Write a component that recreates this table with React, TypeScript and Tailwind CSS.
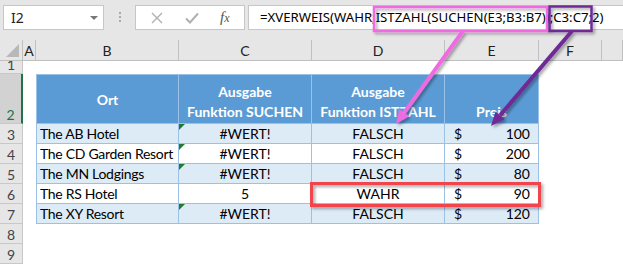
import { Fragment } from "react"

const COLS = ["A", "B", "C", "D", "E", "F", ""]

type Row = { ort: string; suchen: string; istzahl: string; preis: string; err: boolean }

const ROWS: Row[] = [
  { ort: "The AB Hotel", suchen: "#WERT!", istzahl: "FALSCH", preis: "100", err: true },
  { ort: "The CD Garden Resort", suchen: "#WERT!", istzahl: "FALSCH", preis: "200", err: true },
  { ort: "The MN Lodgings", suchen: "#WERT!", istzahl: "FALSCH", preis: "80", err: true },
  { ort: "The RS Hotel", suchen: "5", istzahl: "WAHR", preis: "90", err: false },
  { ort: "The XY Resort", suchen: "#WERT!", istzahl: "FALSCH", preis: "120", err: true }
]

const cellFont = { fontFamily: "Lato, 'Liberation Sans', sans-serif" }

// arrow head points for a line from (x1,y1) to tip (x2,y2)
function arrow(x1: number, y1: number, x2: number, y2: number, len = 14, half = 6) {
  const dx = x2 - x1
  const dy = y2 - y1
  const l = Math.hypot(dx, dy)
  const ux = dx / l
  const uy = dy / l
  const bx = x2 - ux * len
  const by = y2 - uy * len
  const nx = -uy
  const ny = ux
  return {
    line: { x1, y1, x2: bx, y2: by },
    head: `${x2},${y2} ${bx + nx * half},${by + ny * half} ${bx - nx * half},${by - ny * half}`
  }
}

function RowHead({ n, selected }: { n: number | string; selected?: boolean }) {
  return (
    <div
      className={`flex items-end justify-center border-b border-r border-[#c8c8c8] pb-[1px] text-[14px] leading-none ${
        selected ? "bg-[#d2d2d2] text-[#217346] border-r-2 border-r-[#217346]" : "bg-[#e6e6e6] text-[#444]"
      }`}
      style={cellFont}>
      {n}
    </div>
  )
}

function Toolbar() {
  return (
    <div className="flex h-[40px] items-start bg-[#e6e6e6] pt-[5px] text-[14px]" style={{ fontFamily: "'Noto Sans', 'Open Sans', sans-serif" }}>
      <div className="ml-[3px] flex h-[25px] w-[101px] items-center justify-between border border-[#c6c6c6] bg-white pl-[7px] pr-[5px] text-[#222]">
        <span>I2</span>
        <span className="h-0 w-0 border-l-[4px] border-r-[4px] border-t-[4px] border-l-transparent border-r-transparent border-t-[#777]" />
      </div>
      <div className="flex w-[31px] flex-col items-center gap-[2px] pt-[7px]">
        <span className="h-[2px] w-[2px] bg-[#aaa]" />
        <span className="h-[2px] w-[2px] bg-[#aaa]" />
        <span className="h-[2px] w-[2px] bg-[#aaa]" />
      </div>
      <div className="flex h-[25px] w-[110px] items-center border border-[#c6c6c6] bg-white pl-[14px]">
        <svg width="12" height="12" viewBox="0 0 12 12" className="ml-[1px]">
          <path d="M1 1 L11 11 M11 1 L1 11" stroke="#b0b0b0" strokeWidth="1.4" fill="none" />
        </svg>
        <svg width="14" height="12" viewBox="0 0 14 12" className="ml-[22px]">
          <path d="M1 6.5 L5 10.5 L13 1.5" stroke="#b0b0b0" strokeWidth="2" fill="none" />
        </svg>
        <span className="ml-[21px] text-[15px] italic text-[#555]" style={{ fontFamily: "'Liberation Serif', serif" }}>
          f<span className="text-[12px]">x</span>
        </span>
      </div>
      <div className="ml-[3px] flex h-[25px] flex-1 items-center whitespace-nowrap border border-r-0 border-[#c6c6c6] bg-white pl-[11px] text-[13.2px] text-black">
        =XVERWEIS(WAHR;ISTZAHL(SUCHEN(E3;B3:B7));C3:C7;2)
      </div>
    </div>
  )
}

export default function App() {
  const pink = arrow(463, 31, 396, 124)
  const purple = arrow(572, 31, 491, 126)

  return (
    <div className="relative h-[265px] w-[623px] overflow-hidden bg-white">
      <Toolbar />

      <div className="grid grid-cols-[23px_13px_143px_133px_133px_94px_63px_1fr] grid-rows-[21px_13px_50px_repeat(7,20px)]" style={cellFont}>
        {/* column headers */}
        <div className="relative border-b border-r border-[#c0c0c0] bg-[#e6e6e6]">
          <span className="absolute bottom-[3px] right-[3px] h-0 w-0 border-b-[13px] border-l-[13px] border-b-[#b8b8b8] border-l-transparent" />
        </div>
        {COLS.map((c, i) => (
          <div key={i} className="flex items-center justify-center border-b border-r border-[#c0c0c0] bg-[#e6e6e6] text-[14px] text-[#222]">
            {c}
          </div>
        ))}

        {/* row 1 */}
        <RowHead n={1} />
        <div className="col-span-7" />

        {/* row 2: table header */}
        <RowHead n={2} selected />
        <div />
        <div className="flex items-center justify-center border border-[#9bc2e6] bg-[#5b9bd5] text-[14px] font-bold text-white">Ort</div>
        <div className="flex flex-col items-center justify-end border-b border-r border-t border-[#9bc2e6] bg-[#5b9bd5] pb-[1px] text-[14px] font-bold leading-[20px] text-white">
          <span>Ausgabe</span>
          <span>Funktion SUCHEN</span>
        </div>
        <div className="flex flex-col items-center justify-end border-b border-r border-t border-[#9bc2e6] bg-[#5b9bd5] pb-[1px] text-[14px] font-bold leading-[20px] text-white">
          <span>Ausgabe</span>
          <span>Funktion ISTZAHL</span>
        </div>
        <div className="flex items-end justify-center border-b border-r border-t border-[#9bc2e6] bg-[#5b9bd5] pb-[1px] text-[14px] font-bold leading-[20px] text-white">
          Preis
        </div>
        <div />
        <div />

        {/* data rows */}
        {ROWS.map((r, i) => {
          const bg = i % 2 === 0 ? "bg-[#ddebf7]" : "bg-white"
          return (
            <Fragment key={r.ort}>
              <RowHead n={i + 3} />
              <div />
              <div className={`flex items-center whitespace-nowrap border-b border-l border-r border-[#9bc2e6] pl-[3px] text-[14px] tracking-[-0.3px] text-black ${bg}`}>
                {r.ort}
              </div>
              <div className={`relative flex items-center justify-center border-b border-r border-[#9bc2e6] text-[14px] text-black ${bg}`}>
                {r.err && (
                  <span className="absolute left-0 top-0 h-0 w-0 border-r-[6px] border-t-[6px] border-r-transparent border-t-[#1e7b34]" />
                )}
                {r.suchen}
              </div>
              <div className={`flex items-center justify-center border-b border-r border-[#9bc2e6] text-[14px] text-black ${bg}`}>{r.istzahl}</div>
              <div className={`flex items-center justify-between border-b border-r border-[#9bc2e6] pl-[9px] pr-[8px] text-[14px] text-black ${bg}`}>
                <span>$</span>
                <span>{r.preis}</span>
              </div>
              <div />
              <div />
            </Fragment>
          )
        })}

        {/* rows 8, 9 */}
        <RowHead n={8} />
        <div className="col-span-7" />
        <RowHead n={9} />
        <div className="col-span-7" />
      </div>

      {/* annotations */}
      <svg className="pointer-events-none absolute left-0 top-0" width="623" height="265" viewBox="0 0 623 265">
        <defs>
          <filter id="sh" x="-20%" y="-20%" width="140%" height="140%">
            <feDropShadow dx="2" dy="2" stdDeviation="1.6" floodColor="#000" floodOpacity="0.35" />
          </filter>
        </defs>
        <g filter="url(#sh)">
          <rect x="374" y="7" width="173" height="24" fill="none" stroke="#f06ae2" strokeWidth="2.5" />
          <rect x="549.5" y="6.5" width="42" height="24.5" fill="none" stroke="#6f2b96" strokeWidth="2.5" />
          <line {...pink.line} stroke="#f06ae2" strokeWidth="4" />
          <polygon points={pink.head} fill="#f06ae2" />
          <line {...purple.line} stroke="#6f2b96" strokeWidth="4" />
          <polygon points={purple.head} fill="#6f2b96" />
          <rect x="311.5" y="183.5" width="228" height="22" fill="none" stroke="#f2444b" strokeWidth="3" />
        </g>
      </svg>
    </div>
  )
}
